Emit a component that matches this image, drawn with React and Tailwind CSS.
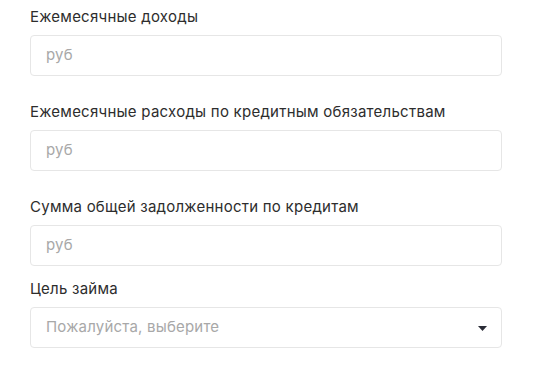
import React from "react";

const Field = ({ label, placeholder, select, className }) => (
  <div className={className}>
    <label className="block text-[15px] leading-[20px] tracking-[0.25px] text-[#2d2d2d] mb-[8px]">{label}</label>
    <div className="relative h-[41px] w-[472px] rounded-[4px] border border-[#e6e6e6] bg-white flex items-center px-[15px]">
      <span className="text-[15px] tracking-[0.2px] text-[#a8a8a8]">{placeholder}</span>
      {select && (
        <svg className="absolute right-[14px] top-[18px]" width="9" height="5" viewBox="0 0 9 5">
          <path d="M0 0h9L4.5 5z" fill="#2a2c36" />
        </svg>
      )}
    </div>
  </div>
);

const App = () => {
  return (
    <div className="min-h-screen bg-white pl-[30px] pt-[7px]" style={{ fontFamily: "Inter, 'Noto Sans', sans-serif" }}>
      <Field label="Ежемесячные доходы" placeholder="руб" />
      <Field className="mt-[26px]" label="Ежемесячные расходы по кредитным обязательствам" placeholder="руб" />
      <Field className="mt-[26px]" label="Сумма общей задолженности по кредитам" placeholder="руб" />
      <Field className="mt-[13px]" label="Цель займа" placeholder="Пожалуйста, выберите" select />
    </div>
  );
};

export default App;
